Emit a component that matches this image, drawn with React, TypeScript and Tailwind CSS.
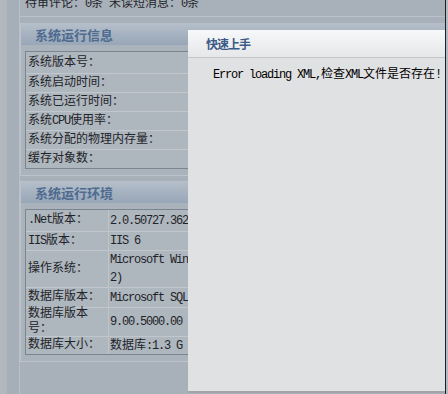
import React from "react";

// ascii runs get squeezed so they sit at half the width of a CJK glyph, like SimSun
function Mix({ text }: { text: string }) {
  const parts = text.split(/([\x20-\x7e]+)/).filter(Boolean);
  return (
    <>
      {parts.map((p, i) =>
        /^[\x20-\x7e]+$/.test(p) ? (
          <span key={i} className="tracking-[-1.2px]">{p}</span>
        ) : (
          <span key={i}>{p}</span>
        )
      )}
    </>
  );
}

const INFO_ROWS = [
  { label: "系统版本号：", h: "h-[21px]" },
  { label: "系统启动时间：", h: "h-[19px]" },
  { label: "系统已运行时间：", h: "h-[19px]" },
  { label: "系统CPU使用率：", h: "h-[19px]" },
  { label: "系统分配的物理内存量：", h: "h-[19px]" },
  { label: "缓存对象数：", h: "h-[19px]" },
];

const ENV_ROWS = [
  { label: [".Net版本："], value: ["2.0.50727.3620"], h: "h-[21px]" },
  { label: ["IIS版本："], value: ["IIS 6"], h: "h-[19px]" },
  { label: ["操作系统："], value: ["Microsoft Windows Server 2003 (Service Pack", "2)"], h: "h-[37px]" },
  { label: ["数据库版本："], value: ["Microsoft SQL Server 2005"], h: "h-[20px]" },
  { label: ["数据库版本", "号："], value: ["9.00.5000.00"], h: "h-[29px]" },
  { label: ["数据库大小："], value: ["数据库:1.3 G"], h: "h-[18px]" },
];

function PanelHeader({ title }: { title: string }) {
  return (
    <div className="h-[22px] bg-linear-to-b from-[#b6c0cb] via-[#a6b2c0] to-[#98a7b8] pl-[14px] font-['Noto_Sans_CJK_SC',sans-serif] text-[13px] font-bold leading-[24px] text-[#4e6b90]">
      {title}
    </div>
  );
}

export default function App() {
  return (
    <div className="relative flex h-[394px] w-[448px] overflow-hidden bg-[#a8b1ba] font-['Liberation_Mono','Noto_Sans_CJK_SC',monospace] text-[12px] text-[#1f2429]">
      <div className="flex w-[20px] shrink-0 border-r border-[#b8bfc6]">
        <div className="w-[7px] bg-[#b2b8be]" />
        <div className="flex-1 bg-[#a6afb8]" />
      </div>

      <div className="flex min-w-0 flex-1 flex-col">
        <div className="h-[17px] border-b border-[#bac1c8] pl-[5px]">
          <p className="mt-[-3px] whitespace-nowrap leading-[14px]">
            <Mix text="待审评论：0条 未读短消息：0条" />
          </p>
        </div>

        <section className="mt-[6px] border-b border-l border-[#bcc3ca] bg-[#aab3bc] pb-[6px]">
          <PanelHeader title="系统运行信息" />
          <div className="ml-[4px] mr-[8px] mt-[6px] border border-[#7a8590] bg-[#aeb6be]">
            {INFO_ROWS.map((r, i) => (
              <div
                key={r.label}
                className={`${r.h} flex items-center whitespace-nowrap pl-[2px] ${i > 0 ? "border-t border-[#c1c7cd]" : ""}`}
              >
                <Mix text={r.label} />
              </div>
            ))}
          </div>
        </section>

        <section className="mt-[5px] border-b border-l border-[#bcc3ca] bg-[#aab3bc] pb-[6px]">
          <PanelHeader title="系统运行环境" />
          <div className="ml-[4px] mr-[8px] mt-[6px] border border-[#7a8590] bg-[#aeb6be]">
            {ENV_ROWS.map((r, i) => (
              <div
                key={r.label.join("")}
                className={`${r.h} flex ${i > 0 ? "border-t border-[#c1c7cd]" : ""}`}
              >
                <div className="flex w-[83px] shrink-0 flex-col justify-center border-r border-[#bdc4ca] pl-[2px] leading-[15px]">
                  {r.label.map((l) => (
                    <span key={l} className="whitespace-nowrap">
                      <Mix text={l} />
                    </span>
                  ))}
                </div>
                <div className="flex flex-col justify-center pl-[1px] leading-[18px]">
                  {r.value.map((v) => (
                    <span key={v} className="whitespace-nowrap">
                      <Mix text={v} />
                    </span>
                  ))}
                </div>
              </div>
            ))}
          </div>
        </section>
      </div>

      <div className="w-[1px] shrink-0 bg-[#1b2028]" />
      <div className="w-[2px] shrink-0 bg-[#b4bac0]" />

      <div className="absolute left-[188px] top-[30px] flex h-[363px] w-[257px] flex-col border-b-2 border-[#a3a5a8] bg-[#e0e1e3]">
        <div className="h-[28px] border-b border-[#c4c6c9] bg-linear-to-b from-[#f7f8f9] to-[#e6e7e9] pl-[18px] font-['Noto_Sans_CJK_SC',sans-serif] text-[12px] font-bold leading-[27px] tracking-[-1px] text-[#3a5985]">
          快速上手
        </div>
        <p className="whitespace-nowrap pl-[25px] pt-[10px] leading-[14px] text-black">
          <Mix text="Error loading XML,检查XML文件是否存在!" />
        </p>
      </div>
    </div>
  );
}
